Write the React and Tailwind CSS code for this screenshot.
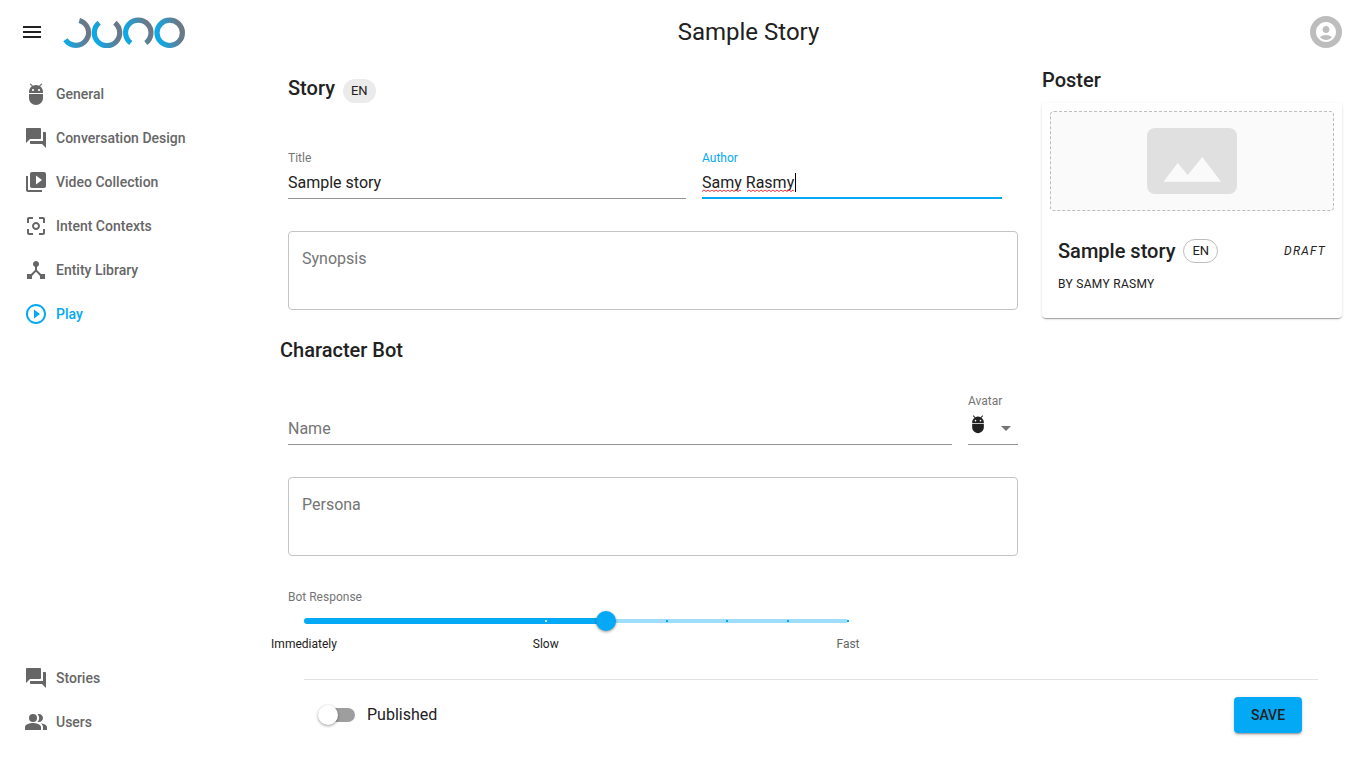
import { useState } from 'react';
import {
  MdAccountCircle,
  MdAdb,
  MdArrowDropDown,
  MdCenterFocusWeak,
  MdDeviceHub,
  MdMenu,
  MdPeopleAlt,
  MdPlayCircleOutline,
  MdQuestionAnswer,
  MdVideoLibrary,
} from 'react-icons/md';

const mainLinks = [
  { label: 'General', Icon: MdAdb },
  { label: 'Conversation Design', Icon: MdQuestionAnswer },
  { label: 'Video Collection', Icon: MdVideoLibrary },
  { label: 'Intent Contexts', Icon: MdCenterFocusWeak },
  { label: 'Entity Library', Icon: MdDeviceHub },
  { label: 'Play', Icon: MdPlayCircleOutline, active: true },
];

const footerLinks = [
  { label: 'Stories', Icon: MdQuestionAnswer },
  { label: 'Users', Icon: MdPeopleAlt },
];

const SPEED_MAX = 9;
const speedStops = [4, 5, 6, 7, 8, 9];
const speedLabels = [
  { value: 0, label: 'Immediately' },
  { value: 4, label: 'Slow' },
  { value: 9, label: 'Fast' },
];

function Logo() {
  const letters = [
    { x: 13, d: 'M16.3 5.4A12.7 12.7 0 1 1 2.4 24.8' },
    { x: 44, d: 'M36.2 7.8A12.7 12.7 0 1 0 51.8 7.8' },
    { x: 75.3, d: 'M67.8 28A12.7 12.7 0 1 1 82.8 28' },
    { x: 106.7, d: 'M94 17.8a12.7 12.7 0 1 1 25.4 0a12.7 12.7 0 1 1 -25.4 0' },
  ];
  return (
    <svg width="124" height="34" viewBox="0 0 124 34" fill="none" role="img" aria-label="Juno">
      {letters.map(({ x, d }, i) => (
        <g key={x}>
          <linearGradient id={`ring-${i}`} gradientUnits="userSpaceOnUse" x1={x - 11} x2={x + 10} y1="20" y2="15">
            <stop offset="0" stopColor="#0fa8e6" />
            <stop offset="1" stopColor="#6a7888" />
          </linearGradient>
          <path d={d} stroke={`url(#ring-${i})`} strokeWidth="5.2" />
        </g>
      ))}
    </svg>
  );
}

function NavList({ items, label }) {
  return (
    <nav aria-label={label}>
      {items.map(({ label: text, Icon, active }) => (
        <a
          key={text}
          href="#"
          aria-current={active ? 'page' : undefined}
          className={`flex h-11 items-center gap-2 pl-6 text-sm font-medium ${active ? 'text-[#03a9f4]' : 'text-[#666666]'}`}
        >
          <Icon size={24} aria-hidden="true" />
          {text}
        </a>
      ))}
    </nav>
  );
}

function TextArea({ id, label }) {
  return (
    <textarea
      id={id}
      aria-label={label}
      placeholder={label}
      className="mt-8 block h-[79px] w-full resize-none rounded border border-[#c4c4c4] px-[13px] pt-[17px] text-base leading-5 outline-none placeholder:text-[#757575]"
    />
  );
}

function SpeedSlider() {
  const [value, setValue] = useState(5);
  const at = (v) => `${(v / SPEED_MAX) * 100}%`;
  return (
    <div className="mt-[33px]">
      <label htmlFor="speed" className="block text-xs leading-4 text-[#757575]">
        Bot Response
      </label>
      <div className="relative mt-1.5 ml-4 h-5 max-w-[544px]">
        <div className="absolute inset-x-0 top-2 h-1 rounded-full bg-[#9fdefb]" />
        <div className="absolute left-0 top-[7px] h-1.5 rounded-full bg-[#03a9f4]" style={{ width: at(value) }} />
        {speedStops.map((stop) => (
          <div
            key={stop}
            className={`absolute top-[9px] size-0.5 -translate-x-1/2 ${stop < value ? 'bg-white/80' : 'bg-[#03a9f4]'}`}
            style={{ left: at(stop) }}
          />
        ))}
        <input
          id="speed"
          type="range"
          min="0"
          max={SPEED_MAX}
          value={value}
          onChange={(e) => setValue(Number(e.target.value))}
          className="absolute inset-y-0 -left-2.5 m-0 h-5 w-[calc(100%+20px)] appearance-none bg-transparent outline-none [&::-webkit-slider-thumb]:size-5 [&::-webkit-slider-thumb]:appearance-none [&::-webkit-slider-thumb]:rounded-full [&::-webkit-slider-thumb]:bg-[#03a9f4] [&::-webkit-slider-thumb]:shadow-[0_1px_3px_rgba(0,0,0,0.4)]"
        />
      </div>
      <div className="relative mt-[5px] ml-4 h-4 max-w-[544px] text-xs leading-4">
        {speedLabels.map((mark) => (
          <span
            key={mark.value}
            className={`absolute -translate-x-1/2 ${mark.value <= value ? 'text-[#212121]' : 'text-[#666666]'}`}
            style={{ left: at(mark.value) }}
          >
            {mark.label}
          </span>
        ))}
      </div>
    </div>
  );
}

function StoryForm() {
  const [title, setTitle] = useState('Sample story');
  const [author, setAuthor] = useState('Samy Rasmy');
  return (
    <section className="min-w-0 flex-1 px-2 pt-2">
      <div className="flex h-8 items-baseline gap-2">
        <h2 className="text-xl leading-8 font-medium">Story</h2>
        <span className="h-6 rounded-full bg-[#ebebeb] px-2 text-[13px] leading-6">EN</span>
      </div>

      <div className="mt-[46px] flex gap-4 pr-4">
        <div className="flex-1">
          <label htmlFor="title" className="block text-xs leading-4 text-[#757575]">
            Title
          </label>
          <input
            id="title"
            value={title}
            onChange={(e) => setTitle(e.target.value)}
            className="block h-[33px] w-full border-b border-[#949494] text-base outline-none"
          />
        </div>
        <div className="w-[300px]">
          <label htmlFor="author" className="block text-xs leading-4 text-[#03a9f4]">
            Author
          </label>
          <div className="relative">
            <input
              id="author"
              value={author}
              spellCheck={false}
              onChange={(e) => setAuthor(e.target.value)}
              className="block h-[33px] w-full border-b border-[#03a9f4] text-base shadow-[inset_0_-1px_0_#03a9f4] outline-none"
            />
            <svg
              aria-hidden="true"
              width="96"
              height="4"
              className="pointer-events-none absolute top-[23px] left-0"
              fill="none"
              stroke="#f0323c"
            >
              <path d="M0 2.5l2-1.5l2 1.5l2-1.5l2 1.5l2-1.5l2 1.5l2-1.5l2 1.5l2-1.5l2 1.5l2-1.5l2 1.5l2-1.5l2 1.5l2-1.5l2 1.5l2-1.5l2 1.5l2-1.5l1 .7" />
              <path d="M45 2.5l2-1.5l2 1.5l2-1.5l2 1.5l2-1.5l2 1.5l2-1.5l2 1.5l2-1.5l2 1.5l2-1.5l2 1.5l2-1.5l2 1.5l2-1.5l2 1.5l2-1.5l2 1.5l2-1.5l2 1.5l2-1.5l2 1.5l2-1.5l1 .7" />
            </svg>
            <span aria-hidden="true" className="pointer-events-none absolute top-[7px] left-[93px] h-[19px] w-px bg-black" />
          </div>
        </div>
      </div>

      <TextArea id="synopsis" label="Synopsis" />

      <h2 className="mt-6 -ml-2 text-xl leading-8 font-medium">Character Bot</h2>

      <div className="mt-[27px] flex items-end gap-4">
        <input
          aria-label="Name"
          placeholder="Name"
          className="block h-[33px] min-w-0 flex-1 border-b border-[#949494] text-base outline-none placeholder:text-[#757575]"
        />
        <div className="w-[50px]">
          <label htmlFor="avatar" className="block text-xs leading-4 text-[#757575]">
            Avatar
          </label>
          <div className="relative flex h-9 items-start justify-between border-b border-[#949494] pt-[5px]">
            <MdAdb size={20} aria-hidden="true" />
            <MdArrowDropDown size={24} className="mt-0.5 shrink-0 text-[#757575]" aria-hidden="true" />
            <select id="avatar" className="absolute inset-0 w-full opacity-0">
              <option aria-label="Robot" />
            </select>
          </div>
        </div>
      </div>

      <TextArea id="persona" label="Persona" />
      <SpeedSlider />
    </section>
  );
}

function PosterPreview() {
  return (
    <aside className="w-[300px] shrink-0">
      <h2 className="text-xl leading-8 font-medium">Poster</h2>
      <div className="mt-[7px] rounded bg-white p-2 shadow-[0_2px_1px_-1px_rgba(0,0,0,0.2),0_1px_1px_0_rgba(0,0,0,0.14),0_1px_3px_0_rgba(0,0,0,0.12)]">
        <button
          type="button"
          aria-label="Upload poster"
          className="flex h-[100px] w-full items-center justify-center rounded border border-dashed border-[#bdbdbd] bg-[#fafafa]"
        >
          <svg width="90" height="66" viewBox="0 0 90 66" aria-hidden="true">
            <rect width="90" height="66" rx="8" fill="#e0e0e0" />
            <path d="M16.5 53.8L30.7 35L40.7 47L55.3 29L74 53.8Z" fill="#fafafa" />
          </svg>
        </button>
        <div className="px-2 pt-6 pb-2">
          <div className="flex h-8 items-center gap-2">
            <h3 className="text-xl leading-8 font-medium">Sample story</h3>
            <span className="h-6 rounded-full border border-[#bdbdbd] px-2 text-[13px] leading-[22px]">EN</span>
            <em className="ml-auto text-xs tracking-widest">DRAFT</em>
          </div>
          <p className="text-xs leading-[35px] tracking-wide uppercase">By Samy Rasmy</p>
        </div>
      </div>
    </aside>
  );
}

export default function App() {
  return (
    <div className="flex min-h-screen flex-col bg-white font-['Roboto',sans-serif] text-[#212121]">
      <header className="flex h-16 items-center pr-[23px] pl-5">
        <button type="button" aria-label="Open menu">
          <MdMenu size={24} />
        </button>
        <a href="#" className="ml-[19px]">
          <Logo />
        </a>
        <h1 className="flex-1 text-center text-2xl">Sample Story</h1>
        <button type="button" aria-label="Account" className="flex size-8 items-center justify-center rounded-full bg-[#bdbdbd] text-white">
          <MdAccountCircle size={24} />
        </button>
      </header>

      <div className="flex flex-1">
        <div className="flex w-64 shrink-0 flex-col justify-between pt-2 pb-[23px]">
          <NavList items={mainLinks} label="Story" />
          <NavList items={footerLinks} label="Workspace" />
        </div>

        <main className="min-w-0 flex-1 pr-[23px] pl-6">
          <div className="flex items-start gap-4">
            <StoryForm />
            <PosterPreview />
          </div>

          <div className="mx-6 mt-[27px] flex items-center justify-between border-t border-[#e0e0e0] px-4 pt-[17px]">
            <label className="flex items-center gap-3 text-base">
              <input
                type="checkbox"
                role="switch"
                className="relative h-3.5 w-[35px] appearance-none rounded-full bg-[#9e9e9e] before:absolute before:-top-[3px] before:-left-0.5 before:size-5 before:rounded-full before:bg-white before:shadow-[0_1px_3px_rgba(0,0,0,0.4)] checked:bg-[#81d4fa] checked:before:left-[17px] checked:before:bg-[#03a9f4]"
              />
              Published
            </label>
            <button
              type="button"
              className="h-9 min-w-[68px] rounded bg-[#03a9f4] px-4 text-sm font-medium uppercase shadow-[0_3px_1px_-2px_rgba(0,0,0,0.2),0_2px_2px_0_rgba(0,0,0,0.14),0_1px_5px_0_rgba(0,0,0,0.12)]"
            >
              Save
            </button>
          </div>
        </main>
      </div>
    </div>
  );
}
